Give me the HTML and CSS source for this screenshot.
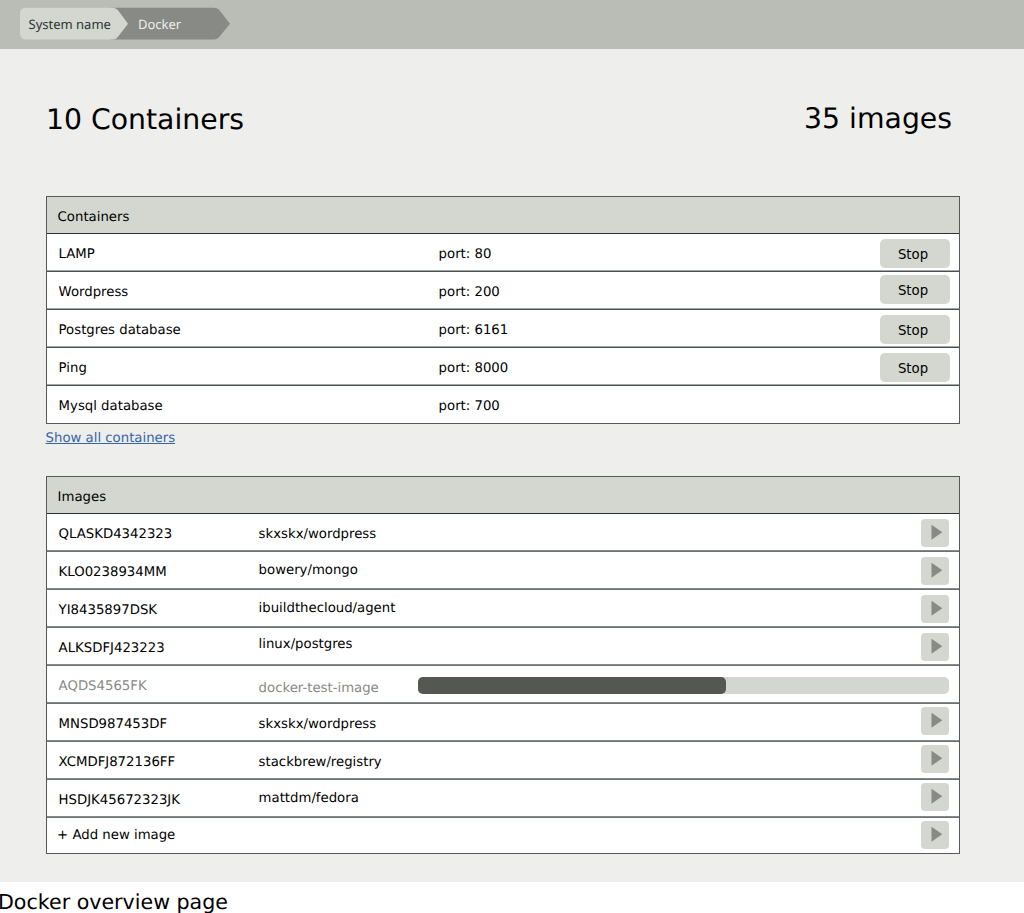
FILE: index.html
```html
<!DOCTYPE html>
<html lang="en">
<head>
<meta charset="utf-8">
<title>Docker overview page</title>
<link rel="stylesheet" href="styles.css">
</head>
<body>
<svg width="0" height="0" class="defs"><defs><symbol id="play" viewBox="0 0 28 28"><path d="M10.5 5.7 L21.3 13.2 L10.5 20.7 Z"/></symbol></defs></svg>
<div class="page">
  <nav class="topbar">
    <svg class="crumbs" width="212" height="34" viewBox="0 0 212 34">
      <path class="crumb-dark" d="M90 .7 H194 Q197 .7 199 2.8 L210 16.8 L199 30.2 Q197 32.6 194 32.6 H90 Z"/>
      <path class="crumb-light" d="M6 .7 H93 Q96 .7 98 3.2 L108 16.8 L98 29.8 Q96 32.6 93 32.6 H6 Q0 32.6 0 26.6 V6.7 Q0 .7 6 .7 Z"/>
    </svg>
    <a class="crumb">System name</a>
    <a class="crumb current">Docker</a>
  </nav>
  <header class="summary">
    <h1>10 Containers</h1>
    <h1 class="image-count">35 images</h1>
  </header>
  <main>
    <section class="table containers">
      <h2 class="head">Containers</h2>
      <div class="row"><span>LAMP</span><span>port: 80</span><button class="stop">Stop</button></div>
      <div class="row"><span>Wordpress</span><span>port: 200</span><button class="stop raised">Stop</button></div>
      <div class="row"><span>Postgres database</span><span>port: 6161</span><button class="stop">Stop</button></div>
      <div class="row"><span>Ping</span><span>port: 8000</span><button class="stop">Stop</button></div>
      <div class="row"><span>Mysql database</span><span>port: 700</span></div>
    </section>
    <a class="show-all">Show all containers</a>
    <section class="table images">
      <h2 class="head">Images</h2>
      <div class="row"><span>QLASKD4342323</span><span>skxskx/wordpress</span><button class="run"><svg><use href="#play"/></svg></button></div>
      <div class="row"><span>KLO0238934MM</span><span class="up">bowery/mongo</span><button class="run"><svg><use href="#play"/></svg></button></div>
      <div class="row"><span>YI8435897DSK</span><span class="up">ibuildthecloud/agent</span><button class="run"><svg><use href="#play"/></svg></button></div>
      <div class="row"><span>ALKSDFJ423223</span><span class="up more">linux/postgres</span><button class="run"><svg><use href="#play"/></svg></button></div>
      <div class="row pending"><span>AQDS4565FK</span><span class="down">docker-test-image</span><div class="progress"><div class="bar" style="width:58%"></div></div></div>
      <div class="row"><span>MNSD987453DF</span><span>skxskx/wordpress</span><button class="run high"><svg><use href="#play"/></svg></button></div>
      <div class="row"><span>XCMDFJ872136FF</span><span>stackbrew/registry</span><button class="run high"><svg><use href="#play"/></svg></button></div>
      <div class="row"><span>HSDJK45672323JK</span><span class="up">mattdm/fedora</span><button class="run high"><svg><use href="#play"/></svg></button></div>
      <div class="row add"><span>+ Add new image</span><span></span><button class="run high"><svg><use href="#play"/></svg></button></div>
    </section>
  </main>
</div>
<p class="caption">Docker overview page</p>
</body>
</html>
```
FILE: styles.css
```css
* { box-sizing: border-box; }
body {
  margin: 0;
  height: 913px;
  overflow: hidden;
  background: #fff;
  color: #000;
  font: 13.27px/20px "DejaVu Sans", sans-serif;
  text-rendering: geometricPrecision;
}
h1, h2, p { margin: 0; font-weight: normal; }
.defs { position: absolute; }
.page { height: 882px; background: #eeeeec; }

.topbar {
  position: relative;
  display: flex;
  height: 49px;
  padding: 14px 0 0 28.5px;
  background: #babdb6;
  font: 13px/20px "Noto Sans", sans-serif;
  color: #2e3436;
}
.crumbs { position: absolute; left: 20px; top: 7px; }
.crumb-dark { fill: #888a85; }
.crumb-light { fill: #d3d7cf; }
.crumb { position: relative; width: 109.5px; }
.current { color: #eeeeec; }

.summary {
  display: flex;
  justify-content: space-between;
  height: 147px;
  padding: 51px 72px 0 46px;
}
h1 { font-size: 28.3px; line-height: 40px; }
.image-count { margin-top: -1px; }

main { padding: 0 64px 0 45.6px; }
.table {
  border: 1px solid #555a59;
  background: #fff;
}
.head {
  height: 37px;
  padding: 11px 0 0 11px;
  background: #d3d7cf;
  border-bottom: 1px solid #2e3436;
  font-size: 13.27px;
}
.row {
  display: grid;
  grid-template-columns: 380px 1fr auto;
  align-items: start;
  height: 38px;
  padding: 11px 9px 0 12px;
  border-bottom: 1px solid #4b5153;
  box-shadow: inset 0 -1px #a5a8a8;
}
.row:last-child { border-bottom: 0; box-shadow: none; height: 37px; }

button {
  border: 0;
  padding: 0;
  color: #000;
  font: inherit;
  background: #d3d7cf;
  border-radius: 5px;
}
.stop { width: 70px; height: 29px; margin-top: -6px; padding: 2px 4px 0 0; }
.raised { margin-top: -8px; padding-top: 2px; }

.show-all {
  display: block;
  width: max-content;
  margin: 5px 0 0;
  color: #3465a4;
  text-decoration: underline;
}
.images { margin-top: 27px; }
.images .row {
  grid-template-columns: 200px 1fr auto;
  padding-right: 10.4px;
  border-bottom-color: #6d7272;
  box-shadow: inset 0 -1px #858989;
}
.up { margin-top: -2px; }
.more { margin-top: -4px; }
.down { margin-top: 2px; }
.run { width: 28px; height: 28px; margin-top: -6px; border-radius: 4px; }
.run svg { display: block; width: 28px; height: 28px; fill: #888a85; }
.high { margin-top: -8px; }

.images .pending { grid-template-columns: 200px 159.4px 1fr; color: #888a85; }
.progress {
  height: 17px;
  border-radius: 5px;
  background: #d3d7cf;
}
.bar { height: 17px; border-radius: 5px; background: #555753; }
.images .add {
  grid-template-columns: 200px 1fr auto;
  height: 35px;
  padding: 8px 10.4px 0 10.5px;
  box-shadow: none;
}
.add .run { margin-top: -5px; }

.caption { margin: 5px 0 0 -2px; font-size: 20.6px; line-height: 31px; }
```
